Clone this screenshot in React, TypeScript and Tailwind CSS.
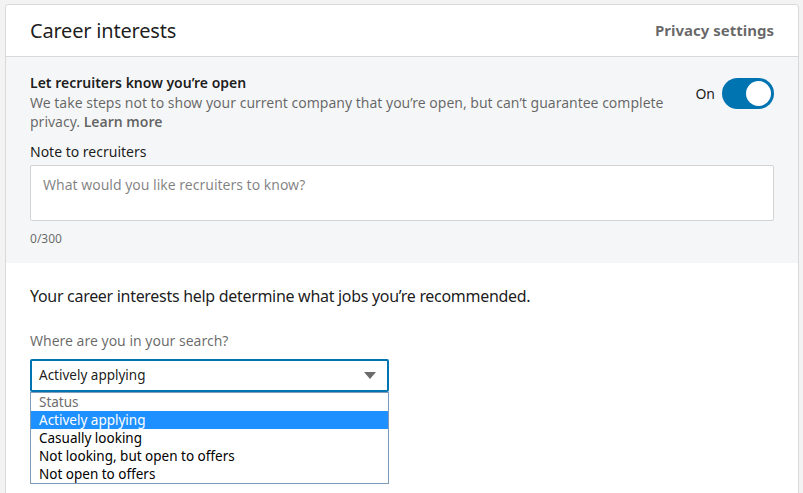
import { useState } from 'react';

const statuses = ['Actively applying', 'Casually looking', 'Not looking, but open to offers', 'Not open to offers'];

export default function App() {
  const [open, setOpen] = useState(true);
  const [note, setNote] = useState('');
  const [status] = useState('Actively applying');

  return (
    <div
      className="min-h-[493px] bg-[#f3f3f3] pl-[5px] pr-[4px] pt-[4px] overflow-hidden"
      style={{ fontFamily: '"Noto Sans", "Open Sans", sans-serif' }}
    >
      <div className="bg-white border border-[#d9d9d9] rounded-t-[3px] min-h-[500px]">
        <div className="flex items-center justify-between h-[52px] pl-[24px] pr-[24px] border-b border-[#d9d9d9]">
          <h2 className="text-[20px] text-[#000000e6] leading-none tracking-[-0.2px]">Career interests</h2>
          <a href="#" className="text-[15px] font-bold text-[#00000099]">
            Privacy settings
          </a>
        </div>

        <div className="bg-[#f5f6f7] px-[24px] pt-[16px] pb-[16px]">
          <div className="flex items-start justify-between">
            <div className="max-w-[652px]">
              <h3 className="text-[14px] font-semibold text-[#000000e6] leading-[20px]">Let recruiters know you’re open</h3>
              <p className="text-[14px] text-[#00000099] leading-[19px]">
                We take steps not to show your current company that you’re open, but can’t guarantee complete privacy.{' '}
                <a href="#" className="font-semibold text-[#00000099]">
                  Learn more
                </a>
              </p>
            </div>
            <div className="flex items-center gap-[7px] mt-[5px]">
              <span className="text-[14px] text-[#000000e6]">{open ? 'On' : 'Off'}</span>
              <button
                type="button"
                onClick={() => setOpen(!open)}
                className={`w-[52px] h-[31px] rounded-full p-[3px] flex ${open ? 'bg-[#0073b1] justify-end' : 'bg-[#86888a] justify-start'}`}
              >
                <span className="w-[25px] h-[25px] rounded-full bg-white" />
              </button>
            </div>
          </div>

          <label className="block mt-[11px] text-[14px] text-[#000000e6] leading-[20px]">Note to recruiters</label>
          <textarea
            value={note}
            onChange={(e) => setNote(e.target.value)}
            placeholder="What would you like recruiters to know?"
            className="mt-[3px] block w-full h-[56px] bg-white border border-[#d4d4d4] rounded-[2px] px-[12px] py-[8px] text-[14px] resize-none outline-none placeholder:text-[#00000080]"
          />
          <div className="mt-[10px] text-[12px] text-[#00000099] leading-[16px]">{note.length}/300</div>
        </div>

        <div className="px-[24px] pt-[22px]">
          <p className="text-[16px] text-[#000000e6] leading-[22px] tracking-[-0.3px]">
            Your career interests help determine what jobs you’re recommended.
          </p>
          <label className="block mt-[24px] text-[14px] text-[#00000099] leading-[20px]">Where are you in your search?</label>
          <div className="mt-[8px] w-[359px]">
            <div className="h-[33px] border-2 border-[#0073b1] rounded-[2px] flex items-center justify-between pl-[7px] pr-[11px] bg-white">
              <span className="text-[13.5px] text-[#000000e6]">{status}</span>
              <svg width="12" height="7" viewBox="0 0 12 7">
                <path d="M0 0h12L6 7z" fill="#6b6b6b" />
              </svg>
            </div>
            <ul className="border border-[#7f9db9] bg-white text-[13.5px] leading-[18px]">
              <li className="pl-[8px] text-[#6d6d6d]">Status</li>
              {statuses.map((s) => (
                <li key={s} className={`pl-[8px] ${s === status ? 'bg-[#1e90ff] text-white' : 'text-black'}`}>
                  {s}
                </li>
              ))}
            </ul>
          </div>
        </div>
      </div>
    </div>
  );
}
